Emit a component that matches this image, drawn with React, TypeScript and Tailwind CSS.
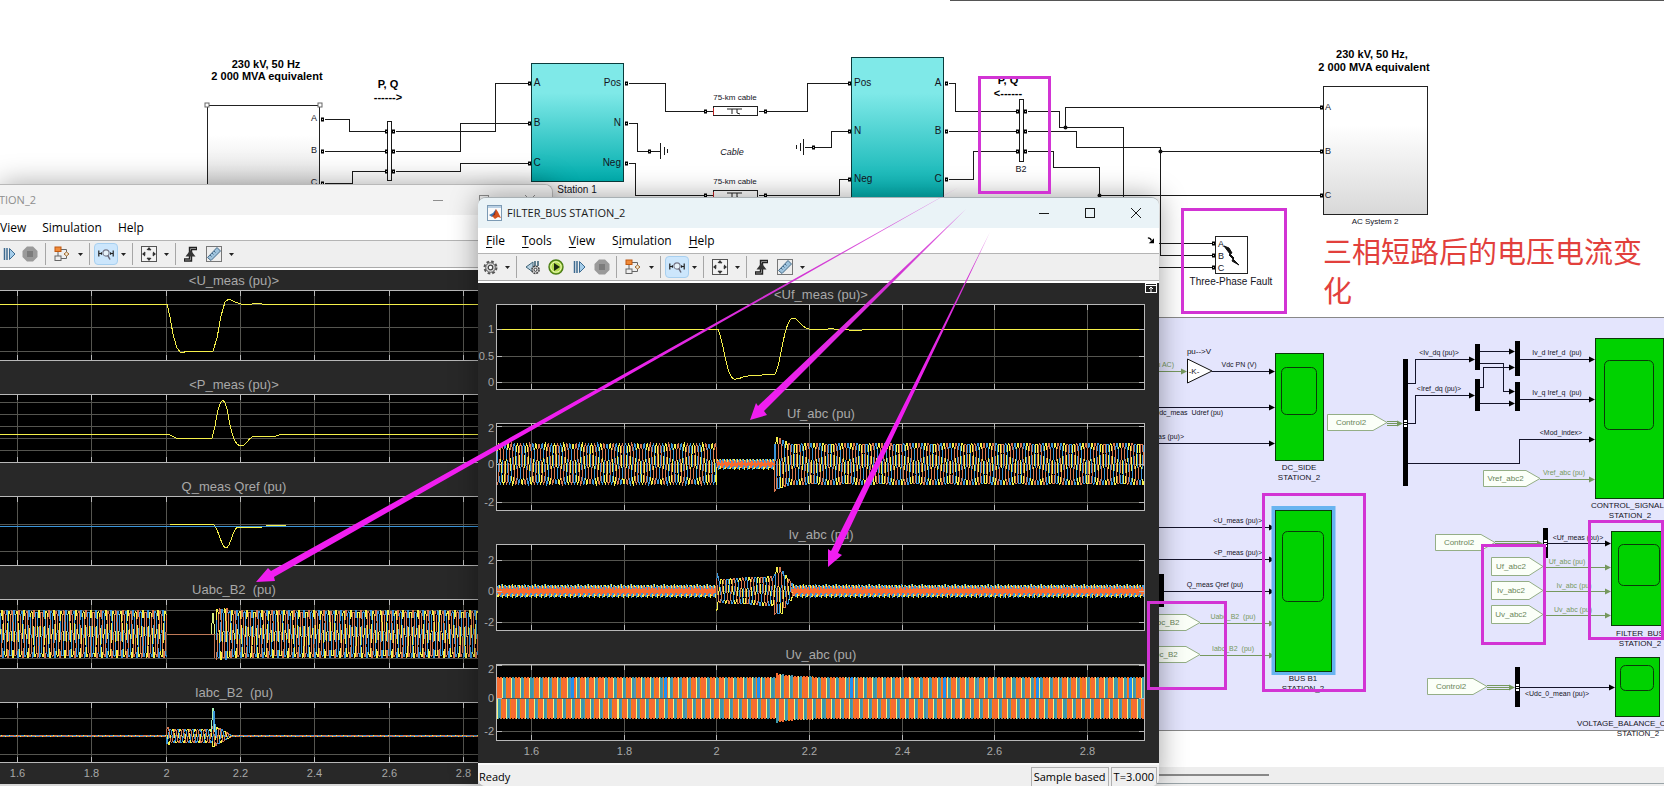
import type { ReactNode } from "react";

type Trace = { d: string; color: string };
type Tick = { y: number; label?: string };
type Plot = {
  title: string;
  height: number;
  ticks: Tick[];
  traces: Trace[];
};
type Span = { from: number; to: number; amp: (x: number) => number };

const YELLOW = "#f5f04a";
const BLUE = "#3a94d8";
const ORANGE = "#f86c30";
const PINK = "#d234d4";
const GREEN = "#76985e";

/* ---------- waveforms ---------- */

function wave(spans: Span[], mid: number, period: number, phase: number) {
  const points: string[] = [];
  for (const span of spans) {
    for (let x = span.from; x <= span.to; x += 1) {
      const y = mid - span.amp(x) * Math.sin((2 * Math.PI * x) / period + phase);
      points.push(`${x.toFixed(1)} ${y.toFixed(1)}`);
    }
  }
  return "M" + points.join("L");
}

function threePhase(spans: Span[], mid: number, period: number): Trace[] {
  return [
    { d: wave(spans, mid, period, 0), color: YELLOW },
    { d: wave(spans, mid, period, 2.094), color: BLUE },
    { d: wave(spans, mid, period, 4.189), color: "#d87850" },
  ];
}

// switching ripple, drawn as a band of vertical strokes
function ripple(from: number, to: number, mid: number, amp: number): Trace[] {
  const band = (size: number, seed: number) => {
    let d = "";
    for (let x = from; x < to; x += 1) {
      const top = size * (0.66 + 0.34 * Math.sin(x * 1.9 + seed));
      const bottom = size * (0.66 + 0.34 * Math.cos(x * 1.3 + seed));
      d += `M${x} ${(mid - top).toFixed(1)}V${(mid + bottom).toFixed(1)}`;
    }
    return d;
  };
  return [
    { d: band(amp * 1.1, 0), color: YELLOW },
    { d: band(amp * 1.1, 2), color: BLUE },
    { d: band(amp * 0.8, 4), color: ORANGE },
  ];
}

function pwm(from: number, to: number, mid: number): Trace[] {
  const period = 9.27;
  const columns = [ORANGE, ORANGE, ORANGE, ORANGE, "#f8f080", "#3a9aa8", "#3a9aa8", "#5c90b4", "#f08010"];
  const paths: Record<string, string> = {};
  for (let x = from; x < to; x += 1) {
    const surge = x > 297 && x < 345 ? 4 * Math.exp(-(x - 297) / 18) : 0;
    const jitter = x % 3 === 0 ? 1 : 0;
    const cell = Math.floor((((x - from) % period) / period) * 9);
    const lowCell = Math.floor((((x - from + period / 2) % period) / period) * 9);
    const up = x % 93 < 3 ? "#2090f0" : columns[cell];
    const down = columns[lowCell];
    paths[up] = (paths[up] ?? "") + `M${x + 0.5} ${mid}V${mid - 21 - surge + jitter}`;
    paths[down] = (paths[down] ?? "") + `M${x + 0.5} ${mid + 1}V${mid + 21 + surge - jitter}`;
  }
  return Object.entries(paths).map(([color, d]) => ({ color, d }));
}

const flat = (size: number) => () => size;

const filterPlots: Plot[] = [
  {
    title: "<Uf_meas (pu)>",
    height: 86,
    ticks: [{ y: 25, label: "1" }, { y: 52, label: "0.5" }, { y: 78, label: "0" }],
    traces: [
      {
        color: YELLOW,
        d: "M18 25H240C246 38 248 72 256 75C262 76 264 72 270 72C280 71 290 71 297 70C302 66 306 14 315 14C321 14 324 25 331 25H350L353 24L356 25H369L371 26H384L386 25H667",
      },
    ],
  },
  {
    title: "Uf_abc (pu)",
    height: 88,
    ticks: [{ y: 3, label: "2" }, { y: 41, label: "0" }, { y: 79, label: "-2" }],
    traces: [
      ...threePhase(
        [
          { from: 18.5, to: 238.5, amp: flat(21) },
          { from: 239, to: 296, amp: flat(3) },
          { from: 297, to: 312, amp: (x) => 28 - (x - 297) * 0.45 },
          { from: 313, to: 667, amp: flat(21) },
        ],
        41,
        9.27,
      ),
      ...ripple(239, 297, 41, 5),
    ],
  },
  {
    title: "Iv_abc (pu)",
    height: 87,
    ticks: [{ y: 16, label: "2" }, { y: 47, label: "0" }, { y: 78, label: "-2" }],
    traces: [
      ...ripple(19, 238, 47, 6),
      ...ripple(314, 667, 47, 6),
      ...threePhase(
        [
          { from: 238.5, to: 240, amp: flat(20) },
          { from: 241, to: 296, amp: (x) => 12 + (x - 241) * 0.06 },
          { from: 297, to: 304, amp: flat(24) },
          { from: 305, to: 315, amp: (x) => 20 - (x - 305) * 1.3 },
        ],
        47,
        9.27,
      ),
    ],
  },
  {
    title: "Uv_abc (pu)",
    height: 77,
    ticks: [{ y: 1, label: "2" }, { y: 34, label: "0" }, { y: 67, label: "-2" }],
    traces: pwm(19, 667, 34),
  },
];

const busPlots: Plot[] = [
  {
    title: "<U_meas (pu)>",
    height: 71,
    ticks: [{ y: 14 }, { y: 37 }, { y: 61 }],
    traces: [
      {
        color: YELLOW,
        d: "M0 14H167L170 27L173 44L177 58L181 63L188 61H213L217 48L221 26L225 12L229 9L235 12L241 14H252L255 13H260L262 14H478",
      },
    ],
  },
  {
    title: "<P_meas (pu)>",
    height: 69,
    ticks: [{ y: 8 }, { y: 20 }, { y: 32 }, { y: 44 }, { y: 56 }],
    traces: [
      {
        color: YELLOW,
        d: "M0 40H168L176 44H212L215 32C220 0 225 -1 229 26C233 48 238 52 241 52C246 52 248 44 254 42H276L282 40H478",
      },
    ],
  },
  {
    title: "Q_meas Qref (pu)",
    height: 70,
    ticks: [{ y: 28 }, { y: 55 }],
    traces: [
      { color: YELLOW, d: "M170 29L174 28H213C219 32 221 52 226 52C231 52 232 31 239 31H262M266 29H286" },
      { color: BLUE, d: "M0 30H478" },
    ],
  },
  {
    title: "Uabc_B2  (pu)",
    height: 70,
    ticks: [{ y: 11 }, { y: 35 }, { y: 59 }],
    traces: [
      ...threePhase([{ from: 0, to: 167, amp: flat(24) }], 35, 7.43),
      { color: "#c07a58", d: "M167 35H214V59" },
      { color: "#d8f080", d: "M211 35L213 14L215 35" },
      ...threePhase([{ from: 216, to: 229, amp: flat(26) }, { from: 230, to: 478, amp: flat(24) }], 35, 7.43),
    ],
  },
  {
    title: "Iabc_B2  (pu)",
    height: 61,
    ticks: [{ y: 16 }, { y: 34 }, { y: 52 }],
    traces: [
      ...threePhase(
        [
          { from: 0, to: 166, amp: flat(1) },
          { from: 167, to: 169, amp: flat(9) },
          { from: 170, to: 212, amp: flat(7) },
          { from: 213, to: 230, amp: (x) => 12 - (x - 213) * 0.6 },
          { from: 231, to: 478, amp: flat(1) },
        ],
        34,
        7.43,
      ),
      { color: "#a8f0b8", d: "M211 30L213 6L215 30" },
      { color: BLUE, d: "M213 28L214 9L216 34" },
    ],
  },
];

/* ---------- scope windows ---------- */

type ScopeProps = {
  plots: Plot[];
  left: number;
  right: number;
  center: number;
  gridX: number[];
  framed?: boolean;
};

const timeLabels = ["1.6", "1.8", "2", "2.2", "2.4", "2.6", "2.8"];

function ScopePlot({ plot, left, right, center, gridX, framed }: { plot: Plot } & Omit<ScopeProps, "plots">) {
  const { height, ticks, traces, title } = plot;
  return (
    <figure className="flex flex-col">
      <figcaption className="h-[18px] whitespace-pre text-center text-[13px] leading-[18px] text-[#a9a9a9]" style={{ width: center * 2 }}>
        {title}
      </figcaption>
      <svg className="w-full" height={height} shapeRendering="crispEdges">
        <rect x={left} y={0} width={right - left} height={height} fill="#000" />
        <g stroke="#555550">
          {gridX.map((x) => (
            <path key={x} d={`M${x} 0V${height}`} />
          ))}
          {ticks.map((t) => (
            <path key={t.y} d={`M${left} ${t.y}.5H${right}`} />
          ))}
        </g>
        {traces.map((t, i) => (
          <path key={i} d={t.d} stroke={t.color} fill="none" />
        ))}
        <g stroke="#b8b8b8" fill="none">
          {gridX.map((x) => (
            <path key={x} d={`M${x} 0v6M${x} ${height}v-6`} />
          ))}
          {framed ? (
            <>
              <rect x={left + 0.5} y={0.5} width={right - left - 1} height={height - 1} />
              {ticks.map((t) => (
                <path key={t.y} d={`M${left} ${t.y}.5h6M${right} ${t.y}.5h-6`} />
              ))}
            </>
          ) : (
            <path d={`M0 .5H${right}M0 ${height - 0.5}H${right}`} />
          )}
        </g>
        {ticks.map((t) =>
          t.label ? (
            <text key={t.y} x={left - 2} y={Math.max(t.y + 4, 9)} textAnchor="end" fontSize="11" fill="#a9a9a9">
              {t.label}
            </text>
          ) : null,
        )}
      </svg>
    </figure>
  );
}

function Scope({ plots, ...axes }: ScopeProps) {
  return (
    <div className="flex flex-1 flex-col bg-[#282828]">
      <div className="flex flex-col gap-[15px]">
        {plots.map((plot) => (
          <ScopePlot key={plot.title} plot={plot} {...axes} />
        ))}
      </div>
      <svg className="w-full" height="20">
        {axes.gridX.map((x, i) => (
          <text key={x} x={x} y="14" textAnchor="middle" fontSize="11" fill="#a9a9a9">
            {timeLabels[i]}
          </text>
        ))}
      </svg>
    </div>
  );
}

function ToolButton({ label, active, children }: { label: string; active?: boolean; children: ReactNode }) {
  return (
    <button
      aria-label={label}
      className={
        active
          ? "flex h-[22px] w-[24px] items-center justify-center rounded-sm border border-[#a8d0f0] bg-[#cce6fc]"
          : "flex h-[22px] w-[18px] items-center justify-center"
      }
    >
      {children}
    </button>
  );
}

function Caret() {
  return (
    <svg width="5" height="3" viewBox="0 0 5 3">
      <path d="M0 0h5L2.500 3z" fill="#222" />
    </svg>
  );
}

function Separator() {
  return <span className="h-[22px] w-px bg-[#a6a6a6]" />;
}

function GearIcon() {
  return (
    <svg width="15" height="15" viewBox="0 0 15 15">
      <circle cx="7.500" cy="7.500" r="6" fill="none" stroke="#555" strokeWidth="2" strokeDasharray="2.700 2" />
      <circle cx="7.500" cy="7.500" r="4.800" fill="#ddd" stroke="#555" />
      <circle cx="7.500" cy="7.500" r="2.300" fill="#fff" stroke="#444" strokeWidth="1.300" />
    </svg>
  );
}

function StepBackIcon() {
  return (
    <svg width="16" height="15" viewBox="0 0 16 15">
      <path d="M8 2L1 7l7 5z" fill="#b9d2e2" stroke="#3f6478" />
      <path d="M10 1v5M13 1v5" stroke="#3f6478" strokeWidth="1.600" />
      <circle cx="10.500" cy="9.800" r="3.600" fill="#ddd" stroke="#444" strokeWidth="1.500" strokeDasharray="2 .8" />
      <circle cx="10.500" cy="9.800" r="1.500" fill="#fff" stroke="#333" />
    </svg>
  );
}

function PlayIcon() {
  return (
    <svg width="16" height="16" viewBox="0 0 16 16">
      <circle cx="8" cy="8" r="7" fill="#b4dc50" stroke="#4b7d16" strokeWidth="1.400" />
      <circle cx="8" cy="8" r="5.200" fill="none" stroke="#e8f6b8" />
      <path d="M6 4l6 4-6 4z" fill="#1c2a10" />
    </svg>
  );
}

function StepIcon() {
  return (
    <svg width="13" height="14" viewBox="0 0 13 14">
      <path d="M1.500 1v12M4 1v12" stroke="#3d6b90" strokeWidth="1.500" />
      <path d="M6.500 1.500v11L12 7z" fill="#a5cdea" stroke="#3d6b90" />
    </svg>
  );
}

function StopIcon() {
  return (
    <svg width="16" height="16" viewBox="0 0 16 16">
      <path d="M5 .5h6L15.500 5v6L11 15.500H5L.5 11V5z" fill="#9a9a9a" />
      <rect x="5" y="5" width="6" height="6" fill="#7c7c7c" />
    </svg>
  );
}

function BlocksIcon() {
  return (
    <svg width="16" height="16" viewBox="0 0 16 16" fill="none">
      <path d="M7 3.500h5.500V6M7 12.500h5.500V10" stroke="#666" />
      <path d="M4 6v4" stroke="#666" />
      <rect x="1" y="1" width="6" height="4.500" fill="#f08a38" stroke="#c05810" />
      <path d="M10 8l2.500-2 2.500 2-2.500 2z" fill="#f4ead0" stroke="#a06830" />
      <rect x="1" y="10" width="6" height="4.500" fill="#eee" stroke="#666" />
    </svg>
  );
}

function ZoomXIcon() {
  return (
    <svg width="16" height="13" viewBox="0 0 16 13" fill="none">
      <path d="M.8 2.500v6M15.200 2.500v6M1 5.500h3M12 5.500h3" stroke="#222" strokeWidth="1.200" />
      <path d="M1.500 5.500L4 4v3zM14.500 5.500L12 4v3z" fill="#222" />
      <circle cx="8" cy="5" r="3.100" fill="#e6f2fa" stroke="#778" strokeWidth="1.100" />
      <path d="M9.800 7.500L12 11.500" stroke="#667" strokeWidth="1.500" />
    </svg>
  );
}

function FitIcon() {
  return (
    <svg width="16" height="16" viewBox="0 0 16 16">
      <rect x=".5" y=".5" width="15" height="15" fill="#f2f2f2" stroke="#555" />
      <circle cx="8" cy="8" r="4" fill="none" stroke="#777" strokeDasharray="3.100 3.100" strokeDashoffset="1.500" />
      <path d="M8 1L5.500 4h5zM8 15l-2.500-3h5zM1 8l3-2.500v5zM15 8l-3-2.500v5z" fill="#333" />
    </svg>
  );
}

function TriggerIcon() {
  return (
    <svg width="15" height="16" viewBox="0 0 15 16">
      <path d="M1 14H7.500V2.500H14" stroke="#222" strokeWidth="3.400" fill="none" />
      <path d="M2 14H7.500V2.500H13" stroke="#888" strokeWidth="1" fill="none" />
      <path d="M7.500 4L12.500 10.500H2.500z" fill="#333" />
    </svg>
  );
}

function RulerIcon() {
  return (
    <svg width="16" height="16" viewBox="0 0 16 16">
      <rect x=".5" y=".5" width="15" height="15" fill="#eee" stroke="#777" />
      <path d="M1.500 11.500L11 1.500l3.500 3.500L5 14.500z" fill="#9fc3dd" stroke="#456a88" />
      <path d="M4 9l1.500 1.500M6 7L7.500 8.500M8 5L9.500 6.500" stroke="#456a88" />
    </svg>
  );
}

function ViewTools() {
  return (
    <>
      <div className="flex w-[43px] items-center gap-[7px] pl-[7px]">
        <ToolButton label="Highlight block"><BlocksIcon /></ToolButton>
        <Caret />
      </div>
      <Separator />
      <div className="flex w-[42px] items-center gap-[3px] pl-[4px]">
        <ToolButton label="Zoom X" active><ZoomXIcon /></ToolButton>
        <Caret />
      </div>
      <Separator />
      <div className="flex w-[42px] items-center gap-[6px] pl-[7px]">
        <ToolButton label="Scale axes"><FitIcon /></ToolButton>
        <Caret />
      </div>
      <Separator />
      <div className="flex items-center gap-[6px] pl-[5px]">
        <ToolButton label="Triggers"><TriggerIcon /></ToolButton>
        <ToolButton label="Cursor measurements"><RulerIcon /></ToolButton>
        <Caret />
      </div>
    </>
  );
}

function MenuItem({ name, mnemonic }: { name: string; mnemonic?: number }) {
  if (mnemonic === undefined) return <button>{name}</button>;
  return (
    <button>
      {name.slice(0, mnemonic)}
      <u className="underline-offset-2">{name[mnemonic]}</u>
      {name.slice(mnemonic + 1)}
    </button>
  );
}

function BusWindow() {
  return (
    <section className="absolute bottom-0 left-0 top-[184px] flex w-[553px] flex-col overflow-hidden rounded-tr-lg border-r border-t border-[#b8b8b8] bg-[#efefef] shadow-[0_0_28px_rgba(0,0,0,0.35)]">
      <header className="flex h-[30px] shrink-0 items-center bg-[#f3f3f3] text-[#8e8e8e]">
        <h2 className="flex w-[36px] justify-end whitespace-nowrap font-['Open_Sans',sans-serif] text-[11px]">TION_2</h2>
        <div className="ml-auto flex items-center gap-[36px] pr-[17px]">
          <svg width="10" height="10" fill="none" stroke="currentColor"><path d="M0 5.500h10" /></svg>
          <svg width="10" height="10" fill="none" stroke="currentColor"><rect x=".5" y=".5" width="9" height="9" /></svg>
          <svg width="10" height="10" fill="none" stroke="currentColor"><path d="M0 0l10 10M10 0L0 10" /></svg>
        </div>
      </header>
      <nav className="flex h-[26px] shrink-0 items-center gap-[16px] border-b border-[#b4b4b4] bg-white font-['Open_Sans',sans-serif] text-[12px] text-black">
        <MenuItem name="View" />
        <MenuItem name="Simulation" />
        <MenuItem name="Help" />
      </nav>
      <div className="flex h-[27px] shrink-0 items-center border-b border-[#aaa] bg-[#efefef]">
        <div className="flex w-[45px] items-center gap-[3px]">
          <ToolButton label="Step forward"><StepIcon /></ToolButton>
          <ToolButton label="Stop"><StopIcon /></ToolButton>
        </div>
        <Separator />
        <ViewTools />
      </div>
      <div className="flex w-[478px] flex-1 flex-col border-t-2 border-white bg-[#282828] pt-[2px]">
        <Scope plots={busPlots} left={0} right={478} center={234} gridX={[17.5, 91.5, 166.5, 240.5, 314.5, 389.5, 463.5]} />
      </div>
      <div className="h-[2px] shrink-0 bg-[#d8d8d8]" />
    </section>
  );
}

function FilterWindow() {
  return (
    <section className="absolute bottom-0 left-[478px] top-[197px] flex w-[681px] flex-col overflow-hidden rounded-lg border-t border-[#a8b0b4] bg-[#efefef] shadow-[0_0_28px_rgba(0,0,0,0.38)]">
      <header className="flex h-[30px] shrink-0 items-center bg-[#eaf3f7] pl-[9px] pr-[18px] text-[#1a1a1a]">
        <svg width="15" height="16" viewBox="0 0 15 16">
          <rect x=".5" y=".5" width="14" height="15" fill="#fafafa" stroke="#7c9ab4" />
          <path d="M1 1h13v2H1z" fill="#b9d0e4" />
          <path d="M2 10l4-2 3-4-2 7-2 1z" fill="#3c78b4" />
          <path d="M9 4l2 3 3 6-3-1-3 2-3-3 2-1z" fill="#d4501c" />
          <path d="M9 4l-1 6-3 1 2-2z" fill="#7c2a20" />
        </svg>
        <h2 className="pl-[5px] font-['Open_Sans',sans-serif] text-[11px]">FILTER_BUS STATION_2</h2>
        <div className="ml-auto flex items-center gap-[36px]">
          <button aria-label="Minimize"><svg width="10" height="10" fill="none" stroke="currentColor"><path d="M0 5.500h10" /></svg></button>
          <button aria-label="Maximize"><svg width="10" height="10" fill="none" stroke="currentColor"><rect x=".5" y=".5" width="9" height="9" /></svg></button>
          <button aria-label="Close"><svg width="10" height="10" fill="none" stroke="currentColor"><path d="M0 0l10 10M10 0L0 10" /></svg></button>
        </div>
      </header>
      <nav className="flex h-[26px] shrink-0 items-center gap-[17px] border-b border-[#b4b4b4] bg-white pl-[8px] pr-[5px] font-['Open_Sans',sans-serif] text-[12px] text-black">
        <MenuItem name="File" mnemonic={0} />
        <MenuItem name="Tools" mnemonic={0} />
        <MenuItem name="View" mnemonic={0} />
        <MenuItem name="Simulation" mnemonic={1} />
        <MenuItem name="Help" mnemonic={0} />
        <svg className="ml-auto" width="7" height="7" viewBox="0 0 8 8">
          <path d="M1 1q3 0 4 3" stroke="#000" strokeWidth="1.600" fill="none" />
          <path d="M8 1.500V7H2z" fill="#000" />
        </svg>
      </nav>
      <div className="flex h-[27px] shrink-0 items-center border-b border-[#aaa] bg-[#efefef]">
        <div className="flex w-[38px] items-center gap-[6px] pl-[3px]">
          <ToolButton label="Configuration"><GearIcon /></ToolButton>
          <Caret />
        </div>
        <Separator />
        <div className="flex w-[99px] items-center gap-[5px] pl-[7px]">
          <ToolButton label="Step back"><StepBackIcon /></ToolButton>
          <ToolButton label="Run"><PlayIcon /></ToolButton>
          <ToolButton label="Step forward"><StepIcon /></ToolButton>
          <ToolButton label="Stop"><StopIcon /></ToolButton>
        </div>
        <Separator />
        <ViewTools />
      </div>
      <div className="relative flex flex-1 flex-col border-t-2 border-white bg-[#282828] pt-[3px]">
        <button aria-label="Maximize axes" className="absolute right-[2px] top-0">
          <svg width="12" height="10" viewBox="0 0 12 10" fill="none" stroke="#fff">
            <rect x=".5" y=".5" width="11" height="9" fill="#222" />
            <path d="M1 2.500h10M6 9V4M4 6l2-2 2 2" />
          </svg>
        </button>
        <Scope plots={filterPlots} left={18} right={667} center={343} gridX={[53.5, 146.5, 238.5, 331.5, 424.5, 516.5, 609.5]} framed />
      </div>
      <footer className="flex h-[23px] shrink-0 items-end border-t-2 border-[#fafafa] bg-[#efefef] font-['Open_Sans',sans-serif] text-[11px] leading-[18px] text-black">
        <span className="pl-px">Ready</span>
        <span className="ml-auto border-l border-r border-t border-[#b0b0b0] px-[2px]">Sample based</span>
        <span className="ml-[2px] mr-[2px] border-l border-r border-t border-[#b0b0b0] px-[2px]">T=3.000</span>
      </footer>
    </section>
  );
}

/* ---------- block diagram ---------- */

type LabelProps = {
  x: number;
  y: number;
  size?: number;
  anchor?: "start" | "middle" | "end";
  fill?: string;
  bold?: boolean;
  italic?: boolean;
  children: string;
};

function Label({ x, y, size = 8, anchor = "middle", fill = "#14141e", bold, italic, children }: LabelProps) {
  return (
    <text
      x={x}
      y={y}
      fontSize={size}
      textAnchor={anchor}
      dominantBaseline="central"
      fill={fill}
      fontWeight={bold ? 700 : 400}
      fontStyle={italic ? "italic" : "normal"}
      className="whitespace-pre"
    >
      {children}
    </text>
  );
}

const ports: [number, number][] = [
  [322, 119], [322, 151], [322, 183],
  [386, 131], [386, 151], [386, 171], [393, 131], [393, 151], [393, 171],
  [529, 83], [529, 123], [529, 163], [626, 83], [626, 123], [626, 163],
  [649, 151], [705, 111], [765, 111], [705, 195], [765, 195], [813, 147],
  [849, 83], [849, 131], [849, 179], [946, 83], [946, 131], [946, 179],
  [1017, 111], [1017, 131], [1017, 151], [1025, 111], [1025, 131], [1025, 151],
  [1321, 107], [1321, 151], [1321, 195], [1213, 243], [1213, 255], [1213, 267],
];

const wires = [
  "M324 119H349V131H384M324 151H384M324 183H352V171H384",
  "M395 131H495V83H527M395 151H460V123H527M395 171H460V163H527",
  "M628 83H665V111H713M758 111H807V83H847",
  "M628 123H637V151H660M628 163H635V195H713M758 195H839V179H847M847 131H831V147H804",
  "M948 83H955V111H1015M948 131H1015M948 179H973V151H1015",
  "M1027 111H1059V127H1123V210M1065 127V107H1319",
  "M1027 131H1076V147H1160V255H1211M1160 151H1319",
  "M1027 151H1053V167H1099V267H1211M1099 195H1319M1140 243H1211",
];

const blackWires = [
  "M1150 407H1271M1150 443H1271M1212 371H1271",
  "M1408 383H1415V359H1470M1408 423H1415V395H1470M1408 463H1519V439H1590",
  "M1480 351H1511M1480 363H1503V391H1511M1480 387H1483V367H1511M1480 403H1511",
  "M1520 359H1590M1520 399H1590",
  "M1150 527H1271M1150 559H1271M1164 591H1271",
  "M1548 543H1606M1520 687H1610",
];

const blackArrows: [number, number][] = [
  [1275, 371], [1275, 407], [1275, 443], [1475, 359], [1475, 395], [1595, 359], [1595, 399], [1595, 439],
  [1515, 351], [1515, 367], [1515, 391], [1515, 403], [1275, 527], [1275, 559], [1275, 591], [1611, 543], [1615, 687],
];

const greenArrows: [number, number][] = [
  [1187, 371], [1403, 423], [1595, 479], [1275, 623], [1275, 655], [1611, 567], [1611, 591], [1611, 615], [1543, 543], [1515, 687],
];

const bars: [number, number, number, number][] = [
  [1403, 359, 5, 127], [1475, 344, 5, 26], [1475, 379, 5, 32], [1515, 341, 5, 35], [1515, 382, 5, 29],
  [1543, 528, 5, 30], [1515, 667, 5, 40], [1159, 574, 5, 33],
];

function Arrowhead({ x, y, fill }: { x: number; y: number; fill: string }) {
  return <path d={`M${x} ${y + 0.5}l-6 -3v6z`} fill={fill} />;
}

function Tag({ x, y, w, h, text }: { x: number; y: number; w: number; h: number; text: string }) {
  const shoulder = x + w - 14;
  return (
    <g>
      <path
        d={`M${x + 0.5} ${y + 0.5}H${shoulder}L${x + w} ${y + h / 2}L${shoulder} ${y + h - 0.5}H${x + 0.5}z`}
        fill="#fbfff8"
        stroke="#94ae86"
      />
      <Label x={x + (w - 12) / 2} y={y + h / 2} fill="#6a865a">{text}</Label>
    </g>
  );
}

function ScopeBlock({ x, y, w, h, screen }: { x: number; y: number; w: number; h: number; screen: [number, number, number, number] }) {
  const [sx, sy, sw, sh] = screen;
  return (
    <g fill="#00d200" stroke="#0a3a0a">
      <rect x={x + 0.5} y={y + 0.5} width={w} height={h} />
      <rect x={sx + 0.5} y={sy + 0.5} width={sw} height={sh} rx="5" />
    </g>
  );
}

function Cable({ y }: { y: number }) {
  return (
    <g>
      <Label x={735} y={y - 14}>75-km cable</Label>
      <rect x="713.5" y={y - 4.5} width="44" height="9" fill="#fff" stroke="#222" />
      <path d={`M713.500 ${y - 3}v7`} stroke="#c02020" />
      <path d={`M727 ${y - 2}h15M732 ${y - 2}v5M737 ${y - 2}v4l3 1`} stroke="#222" fill="none" />
    </g>
  );
}

function Diagram() {
  return (
    <svg className="absolute inset-0 h-full w-full" fontFamily='"Liberation Sans", Arial, sans-serif'>
      <defs>
        <linearGradient id="station" x2="0" y2="1">
          <stop offset=".25" stopColor="#7fe9e8" />
          <stop offset="1" stopColor="#00adad" />
        </linearGradient>
        <linearGradient id="source" x2="0" y2="1">
          <stop offset=".3" stopColor="#fff" />
          <stop offset="1" stopColor="#d8d8d8" />
        </linearGradient>
      </defs>
      <path d="M950 .5H1664" stroke="#555" strokeWidth="1" />

      <rect x="1100" y="317.5" width="600" height="413" fill="#e4e5fd" stroke="#888" />
      <rect x="1100" y="767" width="564" height="19" fill="#eee" />
      <path d="M1100 775H1269" stroke="#888" strokeWidth="2" />
      <path d="M1100 783.500H1664" stroke="#9aa4a8" />

      <rect x="207.5" y="105.500" width="112" height="98" fill="url(#source)" stroke="#222" />
      <rect x="205" y="103" width="4" height="4" fill="#fff" stroke="#666" />
      <rect x="318" y="103" width="4" height="4" fill="#fff" stroke="#666" />
      <rect x="531.5" y="63.500" width="92" height="118" fill="url(#station)" stroke="#0a3c3c" />
      <rect x="851.5" y="57.500" width="92" height="142" fill="url(#station)" stroke="#0a3c3c" />
      <rect x="1323.5" y="86.500" width="104" height="128" fill="url(#source)" stroke="#222" />
      <rect x="1215.5" y="236.500" width="32" height="37" fill="#fff" stroke="#222" />
      <path d="M1224 246l5 2 3 5-2 1 4 4-1 1 6 6-7-4 1-2-4-4 1-1z" fill="#111" stroke="#111" />

      <g fill="none" stroke="#1a1a1a" shapeRendering="crispEdges">
        {wires.map((d) => (
          <path key={d} d={d} transform="translate(.5 .5)" />
        ))}
        <path d="M660.500 143v16M664.500 147v8M667.500 149v4M803.500 139v16M800.500 143v8M796.500 145v4" />
        <rect x="387.5" y="121.500" width="4" height="59" fill="#fff" />
        <rect x="1019.5" y="99.500" width="4" height="62" fill="#fff" />
      </g>
      <g fill="#c8c8c8" stroke="#000" strokeWidth="1">
        {ports.map(([x, y]) => (
          <rect key={`${x}-${y}`} x={x - 0.5} y={y - 1} width="2" height="3" />
        ))}
      </g>
      <g fill="#111">
        <circle cx="1065.500" cy="127.500" r="2" />
        <circle cx="1160.500" cy="151.500" r="2" />
        <circle cx="1099.500" cy="195.500" r="2" />
      </g>
      <Cable y={111} />
      <Cable y={195} />

      <Label x={266} y={64} size={11} bold fill="#000">230 kV, 50 Hz</Label>
      <Label x={267} y={76} size={11} bold fill="#000">2 000 MVA equivalent</Label>
      <Label x={1372} y={54} size={11} bold fill="#000">230 kV, 50 Hz,</Label>
      <Label x={1374} y={67} size={11} bold fill="#000">2 000 MVA equivalent</Label>
      <Label x={388} y={84} size={11} bold fill="#000">P, Q</Label>
      <Label x={388} y={97} size={11} bold fill="#000">{"------>"}</Label>
      <Label x={1008} y={80} size={11} bold fill="#000">P, Q</Label>
      <Label x={1008} y={93} size={11} bold fill="#000">{"<------"}</Label>
      {["A", "B", "C"].map((phase, i) => (
        <g key={phase}>
          <Label x={314} y={118 + i * 32} size={9}>{phase}</Label>
          <Label x={537} y={82 + i * 40} size={10}>{phase}</Label>
          <Label x={938} y={82 + i * 48} size={10}>{phase}</Label>
          <Label x={1328} y={107 + i * 44} size={9}>{phase}</Label>
          <Label x={1221} y={244 + i * 12} size={9}>{phase}</Label>
        </g>
      ))}
      {["Pos", "N", "Neg"].map((name, i) => (
        <g key={name}>
          <Label x={621} y={82 + i * 40} size={10} anchor="end">{name}</Label>
          <Label x={854} y={82 + i * 48} size={10} anchor="start">{name}</Label>
        </g>
      ))}
      <Label x={577} y={189} size={10}>Station 1</Label>
      <Label x={577} y={202} size={10}>(Rectifier)</Label>
      <Label x={732} y={152} size={9} italic>Cable</Label>
      <Label x={1021} y={169} size={9}>B2</Label>
      <Label x={1375} y={221}>AC System 2</Label>
      <Label x={1231} y={281} size={10}>Three-Phase Fault</Label>

      <g fill="none" stroke="#14142a" shapeRendering="crispEdges">
        {blackWires.map((d) => (
          <path key={d} d={d} transform="translate(0 .5)" />
        ))}
      </g>
      <g fill="none" stroke={GREEN} shapeRendering="crispEdges">
        <path d="M1150 371.500H1183M1540 479.500H1590M1200 623.500H1270M1200 655.500H1270M1544 567.500H1606M1544 591.500H1606M1544 615.500H1606" />
        <path d="M1387 421.500H1398M1387 423.500H1398M1387 425.500H1398M1495 541.500H1538M1495 543.500H1538M1487 685.500H1510M1487 687.500H1510M1487 689.500H1510" />
      </g>
      {bars.map(([x, y, w, h]) => (
        <rect key={`${x}-${y}`} x={x} y={y} width={w} height={h} fill="#000" />
      ))}
      {[[1404, 420], [1544, 540], [1516, 684]].map(([x, y]) => (
        <path key={x} d={`M${x} ${y}h3v2h-3zM${x} ${y + 3}h3v1h-3zM${x} ${y + 5}h3v2h-3z`} fill="#fff" />
      ))}
      {blackArrows.map(([x, y]) => (
        <Arrowhead key={`${x}-${y}`} x={x} y={y} fill="#000" />
      ))}
      {greenArrows.map(([x, y]) => (
        <Arrowhead key={`${x}-${y}`} x={x} y={y} fill={GREEN} />
      ))}
      <path d="M1187.500 359V383L1212 371z" fill="#fff" stroke="#111" />
      <Label x={1194} y={371}>-K-</Label>

      <ScopeBlock x={1275} y={353} w={48} h={107} screen={[1281, 367, 35, 47]} />
      <ScopeBlock x={1595} y={338} w={68} h={160} screen={[1604, 360, 49, 69]} />
      <rect x="1273.500" y="508" width="60" height="165" fill="none" stroke="#68b4f0" strokeWidth="4" />
      <ScopeBlock x={1275} y={510} w={56} h={161} screen={[1282, 531, 41, 70]} />
      <ScopeBlock x={1611} y={531} w={60} h={94} screen={[1618, 544, 41, 41]} />
      <ScopeBlock x={1615} y={657} w={44} h={59} screen={[1620, 665, 33, 25]} />

      <Tag x={1327} y={414} w={60} h={17} text="Control2" />
      <Tag x={1483} y={470} w={57} h={17} text="Vref_abc2" />
      <Tag x={1435} y={534} w={60} h={17} text="Control2" />
      <Tag x={1427} y={678} w={60} h={17} text="Control2" />
      <Tag x={1491} y={557} w={52} h={19} text="Uf_abc2" />
      <Tag x={1491} y={581} w={52} h={19} text="Iv_abc2" />
      <Tag x={1491} y={605} w={52} h={19} text="Uv_abc2" />
      <Tag x={1138} y={614} w={62} h={17} text="Uabc_B2" />
      <Tag x={1138} y={646} w={62} h={17} text="Iabc_B2" />

      <Label x={1199} y={351}>{"pu-->V"}</Label>
      <Label x={1174} y={364} size={7} anchor="end" fill={GREEN}>(pu AC)</Label>
      <Label x={1239} y={364} size={7}>Vdc PN (V)</Label>
      <Label x={1223} y={412} size={7} anchor="end">Udc_meas  Udref (pu)</Label>
      <Label x={1184} y={436} size={7} anchor="end">{"<Idc_meas (pu)>"}</Label>
      <Label x={1299} y={467}>DC_SIDE</Label>
      <Label x={1299} y={477}>STATION_2</Label>
      <Label x={1439} y={352} size={7}>{"<Iv_dq (pu)>"}</Label>
      <Label x={1439} y={388} size={7}>{"<Iref_dq (pu)>"}</Label>
      <Label x={1557} y={352} size={7}>Iv_d Iref_d  (pu)</Label>
      <Label x={1557} y={392} size={7}>Iv_q Iref_q  (pu)</Label>
      <Label x={1561} y={432} size={7}>{"<Mod_index>"}</Label>
      <Label x={1564} y={472} size={7} fill={GREEN}>Vref_abc (pu)</Label>
      <Label x={1591} y={505} anchor="start">CONTROL_SIGNALS</Label>
      <Label x={1630} y={515}>STATION_2</Label>
      <Label x={1262} y={520} size={7} anchor="end">{"<U_meas (pu)>"}</Label>
      <Label x={1262} y={552} size={7} anchor="end">{"<P_meas (pu)>"}</Label>
      <Label x={1215} y={584} size={7}>Q_meas Qref (pu)</Label>
      <Label x={1233} y={616} size={7} fill={GREEN}>Uabc_B2  (pu)</Label>
      <Label x={1233} y={648} size={7} fill={GREEN}>Iabc_B2  (pu)</Label>
      <Label x={1303} y={678}>BUS B1</Label>
      <Label x={1303} y={688}>STATION_2</Label>
      <Label x={1578} y={537} size={7}>{"<Uf_meas (pu)>"}</Label>
      <Label x={1567} y={561} size={7} fill={GREEN}>Uf_abc (pu)</Label>
      <Label x={1574} y={585} size={7} fill={GREEN}>Iv_abc (pu)</Label>
      <Label x={1573} y={609} size={7} fill={GREEN}>Uv_abc (pu)</Label>
      <Label x={1640} y={633}>FILTER_BUS</Label>
      <Label x={1640} y={643}>STATION_2</Label>
      <Label x={1557} y={693} size={7}>{"<Udc_0_mean (pu)>"}</Label>
      <Label x={1577} y={723} anchor="start">VOLTAGE_BALANCE_CTRL</Label>
      <Label x={1638} y={733}>STATION_2</Label>
    </svg>
  );
}

function Annotations() {
  return (
    <>
      <svg className="pointer-events-none absolute inset-0 h-full w-full">
        <g fill="none" stroke={PINK} strokeWidth="3">
          <rect x="979.500" y="77.500" width="70" height="115" />
          <rect x="1182.500" y="209.500" width="103" height="103" />
          <rect x="1263.500" y="494.500" width="101" height="196" />
          <rect x="1148.500" y="602.500" width="77" height="86" />
          <rect x="1482.500" y="545.500" width="62" height="98" />
          <rect x="1589.500" y="521.500" width="73" height="117" />
        </g>
        <defs>
          <linearGradient id="arrow" gradientUnits="userSpaceOnUse" x1="0" y1="190" x2="0" y2="400">
            <stop offset="0" stopColor={PINK} stopOpacity=".6" />
            <stop offset=".4" stopColor={PINK} />
            <stop offset="1" stopColor="#f01ef0" />
          </linearGradient>
        </defs>
        <g fill="url(#arrow)">
          <path d="M961 186L271 571L268 568L256 582L275 581L274 577z" />
          <path d="M966 209L758 406L756 403L750 420L767 415L764 411z" />
          <path d="M990 232L831 551L828 549L828 567L842 555L838 553z" />
        </g>
      </svg>
      <p className="absolute left-[1323px] top-[234px] w-[330px] font-['Liberation_Sans','Noto_Sans_CJK_SC',sans-serif] text-[29px] leading-[39px] text-[#e2403c]">
        三相短路后的电压电流变化
      </p>
    </>
  );
}

export default function App() {
  return (
    <main className="relative h-screen min-h-[786px] w-full overflow-hidden bg-white font-['Liberation_Sans',Arial,sans-serif]">
      <Diagram />
      <BusWindow />
      <FilterWindow />
      <Annotations />
    </main>
  );
}
